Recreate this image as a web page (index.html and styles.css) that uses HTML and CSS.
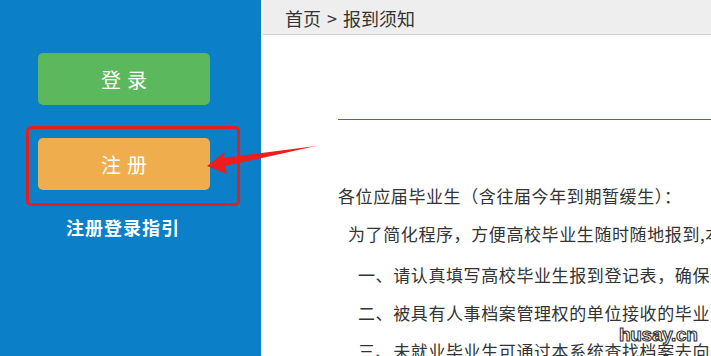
FILE: index.html
```html
<!DOCTYPE html>
<html lang="zh">
<head>
<meta charset="utf-8">
<title>报到须知</title>
<link rel="stylesheet" href="styles.css">
</head>
<body>
<div class="page">
  <aside class="sidebar">
    <div class="btn btn-login">登录</div>
    <div class="btn btn-register">注册</div>
    <div class="guide">注册登录指引</div>
  </aside>
  <main class="main">
    <div class="crumb">首页 &gt; 报到须知</div>
    <div class="content">
      <div class="rule"></div>
      <p class="l1">各位应届毕业生（含往届今年到期暂缓生）：</p>
      <p class="l2">为了简化程序，方便高校毕业生随时随地报到,本系统提供网上报到登记服务。</p>
      <p class="l3">一、请认真填写高校毕业生报到登记表，确保信息真实准确。</p>
      <p class="l3">二、被具有人事档案管理权的单位接收的毕业生，档案转至接收单位。</p>
      <p class="l3">三、未就业毕业生可通过本系统查找档案去向。</p>
    </div>
  </main>
</div>
<div class="redbox"></div>
<svg class="arrow" width="711" height="356" viewBox="0 0 711 356">
  <polygon points="207,166 225,152 223,158 316,146 225,166 227,174" fill="#ee1c1c"/>
</svg>
<div class="mark">husay.cn</div>
</body>
</html>
```
FILE: styles.css
```css
html, body {
  margin: 0;
  padding: 0;
  width: 711px;
  height: 356px;
  overflow: hidden;
  background: #fff;
  font-family: "Noto Sans CJK SC", "Microsoft YaHei", sans-serif;
}
.page {
  display: flex;
  height: 356px;
}
.sidebar {
  width: 261px;
  flex: none;
  background: #0b7fc8;
  padding-top: 53px;
  box-sizing: border-box;
  display: flex;
  flex-direction: column;
  align-items: flex-start;
}
.btn {
  margin-left: 38px;
  width: 172px;
  height: 52px;
  border-radius: 5px;
  color: #fff;
  font-size: 20px;
  letter-spacing: 6px;
  text-indent: 6px;
  display: flex;
  align-items: center;
  justify-content: center;
}
.btn-login { background: #5cb85c; }
.btn-register { background: #f0ad4e; margin-top: 33px; }
.guide {
  margin-left: 66px;
  margin-top: 25px;
  color: #fff;
  font-weight: bold;
  font-size: 18px;
  letter-spacing: 1px;
  line-height: 24px;
}
.main {
  flex: 1;
  margin-left: 2px;
  min-width: 0;
  overflow: hidden;
}
.crumb {
  height: 35px;
  background: #eeeeee;
  border-bottom: 1px solid #cfcfcf;
  box-sizing: border-box;
  padding-left: 22px;
  font-size: 18px;
  line-height: 36px;
  color: #333;
  white-space: nowrap;
  word-spacing: 2px;
}
.content {
  padding-left: 75px;
  padding-top: 84px;
  white-space: nowrap;
  color: #333;
  font-size: 17px;
  letter-spacing: 0.6px;
}
.rule {
  height: 1px;
  background: #2a72a8;
}
.content p {
  margin: 0;
  line-height: 38px;
}
.l1 { margin-top: 57px !important; }
.l2 { padding-left: 10px; }
.l3 { padding-left: 20px; }
.l2 + .l3 { margin-top: 3px !important; }
.redbox {
  position: absolute;
  left: 26px;
  top: 126px;
  width: 208px;
  height: 74px;
  border: 3px solid #e3201f;
  border-radius: 5px;
}
.arrow {
  position: absolute;
  left: 0;
  top: 0;
}
.mark {
  position: absolute;
  left: 619px;
  top: 324px;
  font-family: "Liberation Sans", sans-serif;
  font-weight: bold;
  font-size: 19px;
  color: #fff;
  -webkit-text-stroke: 1.1px #333;
  letter-spacing: -0.3px;
}
```
